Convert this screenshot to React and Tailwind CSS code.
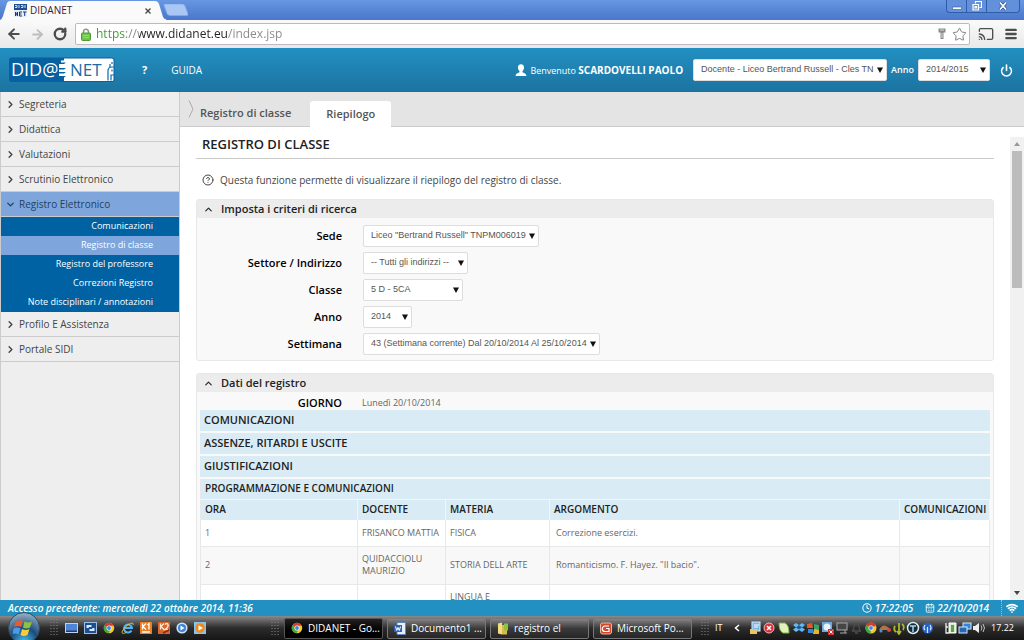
import {
  ArrowLeft,
  ArrowRight,
  CalendarDays,
  Cast,
  ChevronDown,
  ChevronRight,
  ChevronUp,
  CircleHelp,
  Clock,
  Menu,
  Power,
  RotateCw,
  Star,
  Wifi,
} from "lucide-react";

const menu = [
  { label: "Segreteria" },
  { label: "Didattica" },
  { label: "Valutazioni" },
  { label: "Scrutinio Elettronico" },
  {
    label: "Registro Elettronico",
    open: true,
    items: [
      "Comunicazioni",
      "Registro di classe",
      "Registro del professore",
      "Correzioni Registro",
      "Note disciplinari / annotazioni",
    ],
  },
  { label: "Profilo E Assistenza" },
  { label: "Portale SIDI" },
];

const filters = [
  { id: "sede", label: "Sede", value: 'Liceo "Bertrand Russell" TNPM006019', width: "w-[176px]" },
  { id: "settore", label: "Settore / Indirizzo", value: "-- Tutti gli indirizzi --", width: "w-[105px]" },
  { id: "classe", label: "Classe", value: "5 D - 5CA", width: "w-[100px]" },
  { id: "anno", label: "Anno", value: "2014", width: "w-[49px]" },
  { id: "settimana", label: "Settimana", value: "43 (Settimana corrente) Dal 20/10/2014 Al 25/10/2014", width: "w-[237px]" },
];

const lessons = [
  { ora: "1", docente: "FRISANCO MATTIA", materia: "FISICA", argomento: "Correzione esercizi.", height: "h-[26px]" },
  { ora: "2", docente: "QUIDACCIOLU MAURIZIO", materia: "STORIA DELL ARTE", argomento: 'Romanticismo. F. Hayez. "Il bacio".', height: "h-[38px]" },
  { ora: "", docente: "", materia: "LINGUA E", argomento: "", height: "h-[25px]" },
];

function SelectBox({ id, label, value, className }) {
  return (
    <div className={`relative ${className}`}>
      <select
        id={id}
        aria-label={label}
        className="block h-full w-full appearance-none rounded-[2px] border border-[#ddd] bg-white pl-[7px] font-['Liberation_Sans',sans-serif] text-[#555]"
      >
        <option>{value}</option>
      </select>
      <svg viewBox="0 0 6 6" className="pointer-events-none absolute top-1/2 right-1 h-1.5 w-1.5 -translate-y-1/2">
        <path d="M0 0.5h6L3 6z" fill="#111" />
      </svg>
    </div>
  );
}

function ChromeIcon({ className }) {
  return (
    <svg viewBox="0 0 16 16" className={className}>
      <circle cx="8" cy="8" r="7" fill="#f3c923" />
      <path d="M8 8 1.6 5A7 7 0 0 1 14.4 5H8z" fill="#d93b2b" />
      <path d="M8 8 1.6 5a7 7 0 0 0 5.5 10l3.5-5.5z" fill="#3fa648" />
      <circle cx="8" cy="8" r="3.4" fill="#fff" />
      <circle cx="8" cy="8" r="2.6" fill="#4184e4" />
    </svg>
  );
}

function Logo() {
  return (
    <svg viewBox="0 0 106 26" className="h-[26px] w-[106px]" role="img" aria-label="DIDANET">
      <rect x="0" y="0.500" width="105.500" height="24.500" rx="3" fill="#07609f" />
      <path d="M55 1.500h48a1.500 1.500 0 0 1 1.500 1.500v19.500a1.500 1.500 0 0 1-1.500 1.500H55v-3.500l2-1.500h-7v-2.500h5l2-1.500h-7v-2.500h5l2-1.500h-7V7h5l2-1.500h-5V3.500h3z" fill="#fff" />
      <path d="M99 23.500V14q0-4 4-4h2M102 23.500V18h3M103 12.500v2M101 10V7M103 5v2" fill="none" stroke="#0b6ca8" strokeWidth="1.200" />
      <text x="2" y="19" fontSize="18" fontFamily="Open Sans" fill="#fff">DID@</text>
      <text x="61" y="19" fontSize="17" fontFamily="Open Sans" fill="#1b6da5">NET</text>
    </svg>
  );
}

function BrowserChrome() {
  return (
    <div className="shrink-0">
      <div className="flex h-5 items-start justify-between bg-linear-to-b from-[#6797e2] to-[#4a77ca]">
        <div className="flex h-5 items-end">
          <div className="flex h-[19px]">
            <svg viewBox="0 0 12 19" className="h-[19px] w-3">
              <path d="M0 19q2-1 3-4L7 2q1-2 3-2h2v19z" fill="#fafafa" />
            </svg>
            <div className="flex w-[143px] items-center bg-[#fafafa] pl-0.5">
              <svg viewBox="0 0 13 13" className="mr-[3px] h-[13px] w-[13px]">
                <rect width="13" height="6" fill="#1d4d8e" />
                <path d="M1 1.500h2v2H1M5 1v3M7 1.500h2v2H7M11 1v3" stroke="#cfe0f3" fill="none" />
                <rect y="6" width="13" height="7" fill="#e9eef5" />
                <path d="M1.500 12V8l2 4V8M8 8H5.500v4H8M5.500 10H7.500M9 8h3.500M10.700 8v4" stroke="#153c7a" fill="none" />
              </svg>
              <span className="font-['Open_Sans',sans-serif] text-[10px] text-[#402030]">DIDANET</span>
              <button aria-label="Chiudi scheda" className="mr-1 ml-auto">
                <svg viewBox="0 0 6 6" className="h-1.5 w-1.5">
                  <path d="M0.500 0.500l5 5M5.500 0.500l-5 5" stroke="#444" strokeWidth="1.300" />
                </svg>
              </button>
            </div>
            <svg viewBox="0 0 12 19" className="h-[19px] w-3">
              <path d="M0 0h0q3 0 4 3l4 13q1 2 4 3H0z" fill="#fafafa" />
            </svg>
          </div>
          <button aria-label="Nuova scheda" className="mb-1 -ml-1">
            <svg viewBox="0 0 25 12" className="h-3 w-[25px]">
              <path d="M1 1q0-1 1-1h18q1 0 2 2l3 8q0 1.500-1 1.500H7q-2 0-3-2z" fill="#a9c6f4" stroke="#85a9e6" strokeWidth="0.800" />
            </svg>
          </button>
        </div>
        <div className="mr-1 flex h-[13px] divide-x divide-[#2f5da9] rounded-b-sm border border-t-0 border-[#2f5da9] bg-[#6390da]">
          <button aria-label="Riduci" className="flex w-5 items-center justify-center">
            <svg viewBox="0 0 10 10" className="h-2.5 w-2.5">
              <path d="M0.500 6h9v2.500h-9z" fill="#fff" stroke="#315795" strokeWidth="0.600" />
            </svg>
          </button>
          <button aria-label="Ripristina" className="flex w-5 items-center justify-center">
            <svg viewBox="0 0 10 10" className="h-2.5 w-2.5" fill="none">
              <path d="M3.500 2.500v-2h6v6h-2M1 3.500h5.500V9H1zM3 5.500h1.500V7H3z" stroke="#fff" strokeWidth="1.200" />
            </svg>
          </button>
          <button aria-label="Chiudi" className="flex w-8 items-center justify-center">
            <svg viewBox="0 0 10 10" className="h-2.5 w-2.5">
              <path d="M2 1.500l6 7M8 1.500l-6 7" stroke="#27477d" strokeWidth="3" />
              <path d="M2 1.500l6 7M8 1.500l-6 7" stroke="#fff" strokeWidth="1.800" />
            </svg>
          </button>
        </div>
      </div>
      <div className="flex h-7 items-center bg-linear-to-b from-[#fafafa] to-[#e9e9e9] px-1.5 text-[#4d4d4d]">
        <button aria-label="Indietro" className="mr-2"><ArrowLeft size={16} strokeWidth={3} /></button>
        <button aria-label="Avanti" className="mr-2 text-[#bdbdbd]"><ArrowRight size={15} strokeWidth={3} /></button>
        <button aria-label="Ricarica" className="mr-2"><RotateCw size={14} strokeWidth={4} /></button>
        <div className="flex h-[22px] flex-1 items-center rounded-[2px] border border-[#c0b8c0] bg-white pr-0.5 pl-[5px]">
          <svg viewBox="0 0 10 13" className="mr-[5px] h-[13px] w-2.5">
            <path d="M2.500 6V4a2.500 2.800 0 0 1 5 0v2" fill="none" stroke="#8f9a88" strokeWidth="1.600" />
            <rect x="0.500" y="5" width="9" height="7.500" rx="1" fill="#6cc24a" stroke="#4f9e34" />
            <path d="M2 7.500h6M2 9.500h6" stroke="#a5e08b" strokeWidth="0.800" />
          </svg>
          <input
            aria-label="Indirizzo"
            defaultValue="https://www.didanet.eu/index.jsp"
            className="min-w-0 flex-1 bg-[linear-gradient(to_right,#3c9a31_0,#3c9a31_30px,#888_30px,#888_43px,#222_43px,#222_132px,#888_132px)] bg-clip-text font-['Open_Sans',sans-serif] text-xs text-transparent outline-none"
          />
          <svg viewBox="0 0 8 12" className="mr-1.5 h-3 w-2">
            <path d="M0.500 0.500h7v4h-2v6.500h-3V4.500h-2z" fill="#8a8a8a" />
            <path d="M2 2h4M4 5v5" stroke="#d8d8d8" />
          </svg>
          <button aria-label="Preferiti" className="text-[#777]"><Star size={15} strokeWidth={1.5} /></button>
        </div>
        <button aria-label="Trasmetti" className="mr-2.5 ml-2"><Cast size={16} /></button>
        <button aria-label="Menu"><Menu size={14} strokeWidth={4} /></button>
      </div>
    </div>
  );
}

function Header() {
  return (
    <header className="flex h-11 shrink-0 items-center bg-linear-to-b from-[#2290c2] to-[#1c73a0] pr-[11px] pl-[9px] text-white">
      <Logo />
      <a href="#aiuto" className="ml-[27px] text-[11px] font-bold">?</a>
      <a href="#guida" className="ml-6 text-[10px]">GUIDA</a>
      <div className="ml-auto flex items-center text-[10px]">
        <svg viewBox="0 0 12 12" className="mr-[3px] h-3 w-3">
          <path d="M6 0.300c2 0 3.200 1.400 3 3.500C8.900 5.500 8.200 6.500 7.500 7v1.200c1 .8 3.900 1 3.900 3.800H.6C.6 9.200 3.500 9 4.500 8.200V7C3.800 6.500 3.100 5.500 3 3.800 2.800 1.700 4 .3 6 .3z" fill="#fff" />
        </svg>
        <span className="text-[9px]">Benvenuto <b className="text-[10px]">SCARDOVELLI PAOLO</b></span>
        <SelectBox label="Profilo" value="Docente - Liceo Bertrand Russell - Cles TN" className="ml-[10px] h-[22px] w-[194px] text-[9px]" />
        <label htmlFor="anno-scolastico" className="mx-1 text-[9px] font-semibold">Anno</label>
        <SelectBox id="anno-scolastico" value="2014/2015" className="h-[22px] w-[72px] text-[9px]" />
        <button aria-label="Esci" className="ml-[10px]"><Power size={13} strokeWidth={3} /></button>
      </div>
    </header>
  );
}

function Sidebar() {
  return (
    <nav className="w-[180px] shrink-0 border-r border-l border-[#ccc] bg-[#eee] text-[10px] text-[#444]">
      {menu.map((entry) => (
        <div key={entry.label}>
          <button
            className={`flex h-[25px] w-full items-center border-b border-[#ccc] pl-1 ${entry.open ? "bg-[#7ea6dc] text-[#24415f]" : ""}`}
          >
            {entry.open ? (
              <ChevronDown size={11} strokeWidth={3} className="mr-[3px]" />
            ) : (
              <ChevronRight size={11} strokeWidth={3} className="mr-[3px]" />
            )}
            {entry.label}
          </button>
          {entry.items && (
            <ul className="bg-[#0062a3] text-[9px] font-medium text-white">
              {entry.items.map((item) => (
                <li key={item}>
                  <a
                    href="#voce"
                    className={`block h-[19px] pr-[26px] text-right leading-[18px] ${item === "Registro di classe" ? "bg-[#7ea6dc]" : ""}`}
                  >
                    {item}
                  </a>
                </li>
              ))}
            </ul>
          )}
        </div>
      ))}
    </nav>
  );
}

function Panel({ title, children }) {
  return (
    <section className="rounded-[3px] border border-[#e8e8e8] bg-[#f9f9f9]">
      <h2 className="flex h-[18px] items-center bg-[#ececec] pl-1.5 text-[11px] font-semibold text-[#222]">
        <ChevronUp size={11} strokeWidth={2.5} className="mr-[7px]" />
        {title}
      </h2>
      {children}
    </section>
  );
}

function RegisterTable() {
  const th = "h-[21px] border-t border-r border-[#eef7fb] pl-1 text-left font-semibold";
  const td = "border-r border-b border-[#e8e8e8] px-1";
  return (
    <table className="w-full table-fixed border-l border-[#e8e8e8] text-[9px] font-normal text-[#666]">
      <colgroup>
        <col className="w-[157px]" />
        <col className="w-[88px]" />
        <col className="w-[104px]" />
        <col />
        <col className="w-[90px]" />
      </colgroup>
      <thead className="bg-[#d9ecf5] text-[10px] text-[#222]">
        <tr>
          <th colSpan={5} className="h-5 px-1 text-left font-semibold">PROGRAMMAZIONE E COMUNICAZIONI</th>
        </tr>
        <tr>
          <th className={th}>ORA</th>
          <th className={th}>DOCENTE</th>
          <th className={th}>MATERIA</th>
          <th className={th}>ARGOMENTO</th>
          <th className={th}>COMUNICAZIONI</th>
        </tr>
      </thead>
      <tbody className="leading-3">
        {lessons.map((l) => (
          <tr key={l.materia} className={`${l.height} odd:bg-white even:bg-[#f8f8f8]`}>
            <td className={td}>{l.ora}</td>
            <td className={td}>{l.docente}</td>
            <td className={td}>{l.materia}</td>
            <td className={`${td} pl-1.5`}>{l.argomento}</td>
            <td className={td}></td>
          </tr>
        ))}
      </tbody>
    </table>
  );
}

function Content() {
  return (
    <main className="flex min-w-0 flex-1 flex-col bg-white">
      <div className="flex h-[35px] shrink-0 items-end border-b border-[#ccc] bg-[#e4e4e4] text-[11px] font-semibold text-[#555]">
        <svg viewBox="0 0 6 18" className="mb-2 ml-2 h-[18px] w-1.5">
          <path d="M1 0.500l4 8.500-4 8.500" fill="none" stroke="#aaa" />
        </svg>
        <a href="#registro" className="ml-1.5 flex h-[26px] items-center">Registro di classe</a>
        <a href="#riepilogo" className="-mb-px ml-[19px] flex h-[26px] w-[81px] items-center justify-center rounded-t-[3px] bg-white">Riepilogo</a>
      </div>
      <div className="flex min-h-0 flex-1">
        <div className="min-w-0 flex-1 overflow-hidden pr-4 pl-4">
          <h1 className="flex h-8 items-center border-b border-[#ccc] pt-1 pl-1.5 text-[13px] font-semibold text-[#222]">REGISTRO DI CLASSE</h1>
          <p className="flex h-10 items-center pt-0.5 pl-1.5 text-[10px] text-[#444]">
            <CircleHelp size={12} className="mr-1.5" />
            Questa funzione permette di visualizzare il riepilogo del registro di classe.
          </p>
          <div className="flex flex-col gap-3">
            <Panel title="Imposta i criteri di ricerca">
              <form className="flex flex-col gap-[5px] pt-[7px] pb-[5px]">
                {filters.map((f) => (
                  <div key={f.id} className="flex items-center">
                    <label htmlFor={f.id} className="w-[145px] text-right text-[11px] font-semibold text-black">{f.label}</label>
                    <SelectBox id={f.id} value={f.value} className={`ml-[21px] h-[22px] text-[9px] ${f.width}`} />
                  </div>
                ))}
              </form>
            </Panel>
            <Panel title="Dati del registro">
              <div className="flex h-[18px] items-center pt-1">
                <span className="w-[145px] text-right text-[11px] font-semibold text-black">GIORNO</span>
                <span className="ml-5 text-[9px] text-[#666]">Lunedì 20/10/2014</span>
              </div>
              <div className="flex flex-col gap-0.5 px-[3px]">
                {["COMUNICAZIONI", "ASSENZE, RITARDI E USCITE", "GIUSTIFICAZIONI"].map((s) => (
                  <h3 key={s} className="flex h-[21px] items-center bg-[#d9ecf5] pl-1 text-[11px] font-semibold text-[#222]">{s}</h3>
                ))}
                <RegisterTable />
              </div>
            </Panel>
          </div>
        </div>
        <div className="mt-2.5 flex w-[14px] flex-col items-center bg-[#f1f1f1]">
          <svg viewBox="0 0 14 14" className="h-[14px] w-[14px]"><path d="M4 9l3-4 3 4z" fill="#999" /></svg>
          <div className="h-[137px] w-2.5 bg-[#bcbcbc]" />
          <svg viewBox="0 0 14 14" className="mt-auto h-[14px] w-[14px]"><path d="M4 5l3 4 3-4z" fill="#444" /></svg>
        </div>
      </div>
    </main>
  );
}

function StatusBar() {
  return (
    <footer className="flex h-4 shrink-0 items-center bg-[#2291c1] pr-1.5 pl-2 text-[10px] text-white italic">
      <span className="font-semibold">Accesso precedente: mercoledì 22 ottobre 2014, 11:36</span>
      <Clock size={10} strokeWidth={2.5} className="mr-[3px] ml-auto" />
      <span className="font-semibold">17:22:05</span>
      <CalendarDays size={10} strokeWidth={2} className="mr-0.5 ml-3" />
      <span className="font-semibold">22/10/2014</span>
      <span className="mr-1 ml-3 h-full border-l border-dotted border-[#8cc7e0]" />
      <Wifi size={12} strokeWidth={3.5} />
    </footer>
  );
}

function Grip() {
  return (
    <svg viewBox="0 0 8 18" className="h-[18px] w-2">
      <path d="M1 0v18M4 0v18M7 0v18" stroke="#8a8a8a" strokeDasharray="1 2" />
    </svg>
  );
}

function QuickLaunch() {
  return (
    <div className="flex items-center gap-[6px]">
      <button aria-label="Desktop">
        <svg viewBox="0 0 13 12" className="h-3 w-[13px]">
          <rect x="0.500" y="1.500" width="12" height="9" fill="#4d86d8" stroke="#bcd2ef" />
          <path d="M1 8.500h11v1.500H1z" fill="#243d66" />
        </svg>
      </button>
      <button aria-label="Cambia finestra">
        <svg viewBox="0 0 13 12" className="h-3 w-[13px]">
          <rect x="0.500" y="0.500" width="12" height="11" fill="#1b4f94" stroke="#9cbfe8" />
          <path d="M2 2.500h6v4H2zM5 5.500h6v4H5z" fill="#dceaff" stroke="#1b4f94" />
        </svg>
      </button>
      <button aria-label="Chrome"><ChromeIcon className="h-3 w-3" /></button>
      <button aria-label="Internet Explorer">
        <svg viewBox="0 0 13 12" className="h-3 w-[13px]" fill="none">
          <path d="M10.500 8.500a4 4 0 1 1 .5-2.500H3.500" stroke="#4fb4f1" strokeWidth="2" />
          <path d="M12 3c1-3-3-2-6 .5S0 10 1.500 11.300c1 .6 3-.5 4-1.300" stroke="#f2c443" strokeWidth="0.900" />
        </svg>
      </button>
      <button aria-label="K1">
        <svg viewBox="0 0 12 12" className="h-3 w-3">
          <rect width="12" height="12" fill="#ee7d22" />
          <path d="M2.500 1.500v6M6 1.500L3 4.500l3 3M9 7.500v-6L7.500 3M2 10h8" stroke="#fff" strokeWidth="1.300" fill="none" />
        </svg>
      </button>
      <button aria-label="K2">
        <svg viewBox="0 0 12 12" className="h-3 w-3">
          <rect width="12" height="12" fill="#d9652a" />
          <path d="M2.500 1.500v6M6 1.500L3 4.500l3 3M7 2.500q2-2 3 0t-3 5h3" stroke="#ffe9cf" strokeWidth="1.300" fill="none" />
          <path d="M5 11l6-3" stroke="#8f1f1f" strokeWidth="1.500" />
        </svg>
      </button>
      <button aria-label="Riproduttore">
        <svg viewBox="0 0 12 12" className="h-3 w-3">
          <circle cx="6" cy="6" r="5.600" fill="#cfe4fa" />
          <circle cx="6" cy="6" r="4" fill="#3b84d6" />
          <path d="M4.500 3.500L8.500 6l-4 2.500z" fill="#fff" />
        </svg>
      </button>
      <button aria-label="Media Player">
        <svg viewBox="0 0 12 12" className="h-3 w-3">
          <rect width="12" height="12" fill="#8cc3e9" />
          <circle cx="6" cy="6" r="4.800" fill="#f08a1c" />
          <path d="M4.500 3.200L8.800 6 4.500 8.800z" fill="#fff" />
        </svg>
      </button>
    </div>
  );
}

function Tray() {
  return (
    <svg viewBox="0 0 238 14" className="h-[14px] w-[238px]" fill="none" role="img" aria-label="Area di notifica">
      <rect x="3" y="1" width="8" height="9" fill="#78b7e6" stroke="#d8ecfa" />
      <path d="M1 8h7v5H1z" fill="#e9c267" />
      <path d="M5 4h5M5 6h4" stroke="#fff" />
      <circle cx="20" cy="7" r="5" fill="#d62f35" stroke="#f3bcbc" />
      <path d="M18 5l4 4M22 5l-4 4" stroke="#fff" strokeWidth="1.500" />
      <path d="M30 2h6q4 2 4 10h-6q-4-2-4-10z" fill="#e2f0c0" stroke="#86b347" />
      <path d="M44 4l3-2 3 2 3-2 3 2-3 2.500 3 2-3 2.500-3-2-3 2-3-2.500 3-2z" fill="#65b8f1" />
      <path d="M50 4l3 2.500-3 2-3-2z" fill="#1d5b93" />
      <path d="M58 3l5-1 1 5h-6z" fill="#e15a2b" />
      <path d="M65 3l5 1v5h-5z" fill="#37a36b" />
      <path d="M59 8h5v4h-5z" fill="#3985d2" />
      <path d="M65 8l5 1v4h-6z" fill="#e8b42e" />
      <rect x="73" y="1" width="10" height="10" fill="#6fa8da" />
      <circle cx="78" cy="6" r="3.500" fill="#e8f2fa" />
      <path d="M79 8h6v6h-6z" fill="#d13232" />
      <path d="M80.500 9.500l3 3M83.500 9.500l-3 3" stroke="#fff" />
      <rect x="88" y="2" width="10" height="7" fill="#454545" stroke="#aaa" />
      <path d="M91 12h7M96 9v3" stroke="#aaa" />
      <path d="M103 10q2-1 2-4a2.500 3 0 0 1 5 0q0 3 2 4zM106 12h3" stroke="#4c4c4c" strokeWidth="1.300" />
      <circle cx="122" cy="7" r="5.500" fill="#f3c923" />
      <path d="M122 7l-5-2.500a5.500 5.500 0 0 1 10 0z" fill="#d93b2b" />
      <path d="M122 7l-5-2.500a5.500 5.500 0 0 0 4.500 8z" fill="#3fa648" />
      <circle cx="122" cy="7" r="2.300" fill="#4184e4" stroke="#fff" strokeWidth="0.700" />
      <path d="M130 9q3-6 7-4t5 4z" fill="#af7644" />
      <circle cx="132" cy="10" r="1.500" fill="#4d92d8" />
      <circle cx="140" cy="9" r="2" fill="#cf4949" />
      <path d="M146 5q-2 4 1 6M154 9q2-4-1-6M150 2v10M148 10l2 3 2-3" stroke="#a9b92b" strokeWidth="1.800" />
      <circle cx="164" cy="7" r="5.500" fill="#182b36" stroke="#d7eef8" strokeWidth="1.500" />
      <path d="M161 5h6M164 5v6" stroke="#a5d9ef" strokeWidth="1.500" />
      <circle cx="178.500" cy="7" r="5.500" fill="#2762c4" />
      <path d="M176 4q-2 3 0 5M181 4q2 3 0 5M178.500 6v6" stroke="#dce9ff" strokeWidth="1.200" />
      <path d="M200 2h7v10h-7z" fill="#d8e8d2" stroke="#fff" />
      <path d="M202 4h3v7h-3z" fill="#53a842" />
      <path d="M197 2v4h2M197 6v6h3" stroke="#eee" strokeWidth="1.300" />
      <rect x="214" y="2" width="8" height="6" fill="#3584dc" stroke="#d7e9fb" />
      <rect x="210" y="6" width="8" height="6" fill="#2569b4" stroke="#d7e9fb" />
      <path d="M224 5h2l4-3v10l-4-3h-2z" fill="#eee" />
      <path d="M232 4.500q2 2.500 0 5M234 3q3 4 0 8" stroke="#c5c5c5" />
    </svg>
  );
}

function TaskButton({ icon, label, active }) {
  return (
    <button
      className={`flex h-[21px] w-[99px] items-center gap-[5px] rounded-[2px] border pl-1.5 text-[10px] text-white ${
        active
          ? "border-[#555] bg-linear-to-b from-[#222] to-black"
          : "border-[#777] bg-linear-to-b from-[#858585] via-[#3a3a3a] to-[#262626]"
      }`}
    >
      {icon}
      {label}
    </button>
  );
}

function Taskbar() {
  return (
    <div className="flex h-6 shrink-0 items-center bg-linear-to-b from-[#8b8b8b] via-[#2c2c2c] to-[#161616] pr-2.5 text-white">
      <button aria-label="Start" className="relative z-10 -mt-1 ml-[7px]">
        <svg viewBox="0 0 34 28" className="h-7 w-[34px]">
          <defs>
            <radialGradient id="orb" cx="50%" cy="95%" r="90%">
              <stop offset="0" stopColor="#45c2ea" />
              <stop offset="0.500" stopColor="#1b4b7d" />
              <stop offset="1" stopColor="#8fa9bd" />
            </radialGradient>
          </defs>
          <circle cx="17" cy="16" r="15.500" fill="url(#orb)" stroke="#33485a" />
          <path d="M9 10q4-3 7-1l-2 6q-3-2-7 0z" fill="#ea5b2c" />
          <path d="M17.500 9.500q4 2 7.500 0l-2 6q-4 2-7 0z" fill="#8bc53f" />
          <path d="M6.500 16.500q4-2 7 0l-2 6q-3-2-6 0z" fill="#4b9be8" />
          <path d="M15 17q4 2 7.500 0l-2 6q-4 2-7 0z" fill="#f8cc38" />
        </svg>
      </button>
      <div className="mr-[7px] ml-[9px]"><Grip /></div>
      <QuickLaunch />
      <div className="mr-[5px] ml-[65px]"><Grip /></div>
      <div className="flex gap-1">
        <TaskButton active label="DIDANET - Go..." icon={<ChromeIcon className="h-3 w-3" />} />
        <TaskButton
          label="Documento1 ..."
          icon={
            <svg viewBox="0 0 12 13" className="h-[13px] w-3">
              <path d="M3 0.500h8.500v12H3z" fill="#e8f0fb" stroke="#5b85c6" />
              <path d="M0 3h8v7H0z" fill="#2e62b4" />
              <path d="M1.500 4.500l1.200 4L4 5.500l1.300 3 1.200-4" stroke="#fff" fill="none" />
            </svg>
          }
        />
        <TaskButton
          label="registro el"
          icon={
            <svg viewBox="0 0 12 13" className="h-[13px] w-3">
              <path d="M1 1.500L5 0.500v12l-4-1z" fill="#f3dd83" />
              <path d="M5 3h5v9.500H5z" fill="#dbb84c" />
              <path d="M7 1.500h4v7H7z" fill="#88c63d" />
            </svg>
          }
        />
        <TaskButton
          label="Microsoft Po..."
          icon={
            <svg viewBox="0 0 12 13" className="h-[13px] w-3">
              <rect x="0.500" y="1" width="11" height="11" rx="2" fill="#d5492a" stroke="#f3b39f" />
              <path d="M9 4H5a2.500 2.500 0 0 0 0 5.500h4V6.500H6" stroke="#fff" strokeWidth="1.200" fill="none" />
            </svg>
          }
        />
      </div>
      <div className="ml-[9px]"><Grip /></div>
      <span className="ml-1.5 text-[9px]">IT</span>
      <svg viewBox="0 0 6 8" className="mr-[9px] ml-auto h-2 w-1.5"><path d="M5 1L1.500 4 5 7" stroke="#fff" strokeWidth="1.500" fill="none" /></svg>
      <Tray />
      <span className="ml-1 text-[9px]">17.22</span>
    </div>
  );
}

export default function App() {
  return (
    <div className="flex h-screen flex-col overflow-hidden font-['Open_Sans',sans-serif]">
      <BrowserChrome />
      <Header />
      <div className="flex min-h-0 flex-1">
        <Sidebar />
        <Content />
      </div>
      <StatusBar />
      <Taskbar />
    </div>
  );
}
